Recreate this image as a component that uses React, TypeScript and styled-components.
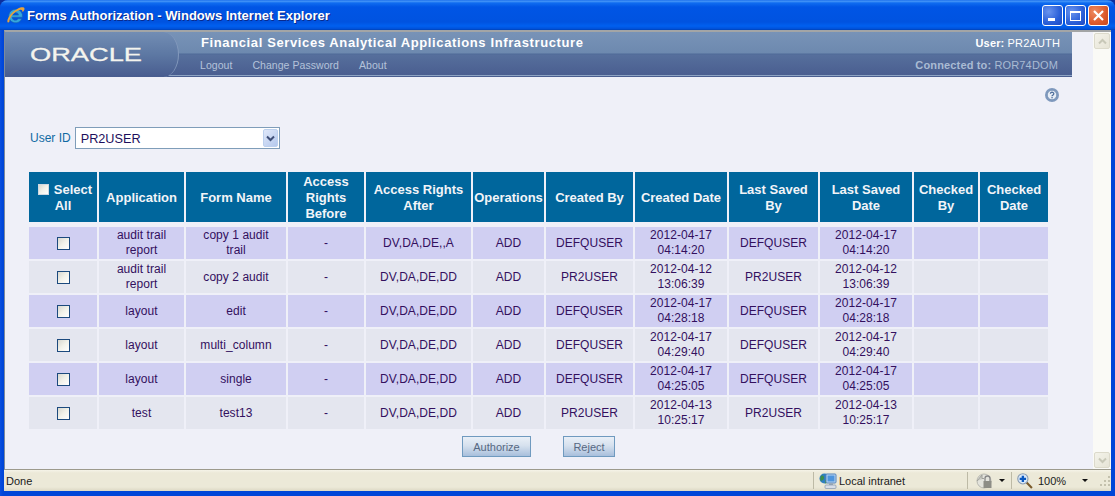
import React from "react";
import styled, { createGlobalStyle } from "styled-components";

const Global = createGlobalStyle`
  html, body { margin: 0; padding: 0; background: #0b2f9e; }
  * { box-sizing: border-box; }
`;

const Window = styled.div`
  width: 1115px;
  height: 496px;
  display: flex;
  flex-direction: column;
  overflow: hidden;
  background: linear-gradient(90deg, #0a4fe0 0, #0046d8 3px, #0046d8 100%);
  border-radius: 8px 8px 0 0;
  font-family: "Liberation Sans", Arial, sans-serif;
`;

const TitleBar = styled.div`
  height: 30px;
  flex: none;
  display: flex;
  align-items: center;
  padding: 1px 4px 0 5px;
  background: linear-gradient(180deg, #0a5fe8 0, #4b9bf8 1px, #0f6cf0 3px, #0055e5 7px, #0053e0 22px, #0060f0 26px, #0050d8 29px, #0040b0 100%);
`;

const TitleText = styled.span`
  margin-left: 1px;
  flex: 1;
  color: #fff;
  font-weight: 700;
  font-size: 13px;
  letter-spacing: 0;
  text-shadow: 1px 1px 0 #0a2a8c;
  white-space: nowrap;
`;

const WinButtons = styled.div`
  display: flex;
  gap: 2px;
  margin-right: 2px;
`;

const WinButton = styled.div<{ $close?: boolean }>`
  width: 21px;
  height: 21px;
  border: 1px solid #fff;
  border-radius: 3px;
  background: ${(p) =>
    p.$close
      ? "radial-gradient(circle at 30% 30%, #ee8a60, #dc5a2c 60%, #c8481c)"
      : "radial-gradient(circle at 30% 30%, #6a94ee, #2a5fd8 60%, #1c49c4)"};
  display: flex;
  align-items: center;
  justify-content: center;
`;

const Frame = styled.div`
  flex: 1;
  min-height: 0;
  display: flex;
  flex-direction: column;
  margin: 0 4px 5px 4px;
`;

const Viewport = styled.div`
  flex: 1;
  min-height: 0;
  display: flex;
  border-top: 2px solid #a3a5a6;
  border-left: 1px solid #7d8a9c;
  border-bottom: 1px solid #9c9a8c;
`;

const Page = styled.main`
  flex: 1;
  min-width: 0;
  background: #eff0f8;
  color: #33105e;
  display: flex;
  flex-direction: column;
`;

const Banner = styled.header`
  flex: none;
  height: 45px;
  margin-right: 21px;
  display: flex;
  background: linear-gradient(180deg, #7893b7 0, #6d89af 21px, #4f6a98 22px, #566f9c 23px, #4a5e90 43px, #8ea4c4 43px, #8ea4c4 44px, #4a5e90 44px);
  position: relative;
`;

const LogoPanel = styled.div`
  flex: none;
  width: 174px;
  border-right: 1px solid #8399bc;
  border-radius: 0 16px 16px 0 / 0 23px 23px 0;
  display: flex;
  align-items: center;
  padding-left: 24px;
  background: linear-gradient(180deg, #728db4 0, #5d78a3 50%, #485c8f 100%);
`;

const BannerMain = styled.div`
  flex: 1;
  min-width: 0;
  display: flex;
  flex-direction: column;
  padding-left: 21px;
  padding-right: 12px;
`;

const BannerRow = styled.div<{ $top?: boolean }>`
  height: ${(p) => (p.$top ? "21px" : "23px")};
  display: flex;
  align-items: center;
  justify-content: space-between;
  padding-top: ${(p) => (p.$top ? "0" : "1px")};
`;

const AppTitle = styled.span`
  margin-left: 1px;
  color: #fff;
  font-weight: 700;
  font-size: 13px;
  letter-spacing: 0.62px;
  white-space: nowrap;
`;

const Nav = styled.nav`
  display: flex;
  gap: 20px;
`;

const NavLink = styled.span`
  color: #b4c3da;
  font-size: 10.5px;
  letter-spacing: 0.05px;
`;

const Info = styled.span<{ $dim?: boolean }>`
  color: ${(p) => (p.$dim ? "#a9bbd3" : "#fff")};
  font-size: 11px;
  white-space: nowrap;
  letter-spacing: 0.15px;
  margin-right: ${(p) => (p.$dim ? "2px" : "0")};
  b { font-weight: 700; }
`;

const HelpRow = styled.div`
  display: flex;
  justify-content: flex-end;
  padding: 11px 34px 0 0;
  height: 25px;
`;

const UserRow = styled.div`
  display: flex;
  align-items: center;
  gap: 4px;
  margin: 25px 0 0 25px;
  height: 22px;
`;

const UserLabel = styled.label`
  color: #0f6aa3;
  font-size: 12px;
  font-weight: 400;
`;

const SelectBox = styled.div`
  width: 205px;
  height: 22px;
  background: #fff;
  border: 1px solid #7f9db9;
  display: flex;
  align-items: center;
  justify-content: space-between;
  padding: 1px 0 0 5px;
  color: #1d0f5c;
  font-size: 12.7px;
`;

const SelectArrow = styled.span`
  width: 15px;
  height: 18px;
  margin: -1px 1px 0 0;
  border-radius: 2px;
  background: linear-gradient(135deg, #e0e8fa, #b4c8ec);
  border: 1px solid #bcd0ee;
  display: flex;
  align-items: center;
  justify-content: center;
`;

const Grid = styled.div`
  margin: 23px 0 0 24px;
  width: 1019px;
  display: grid;
  grid-template-columns: 68px 85px 100px 76px 105px 71px 87px 92px 89px 92px 64px 68px;
  grid-template-rows: 53px repeat(6, 32px);
  column-gap: 2px;
  row-gap: 2px;
`;

const HeadCell = styled.div`
  background: #00669c;
  color: #f2f4f8;
  font-weight: 700;
  font-size: 13px;
  line-height: 16px;
  text-align: center;
  margin-bottom: 3px;
  display: flex;
  align-items: center;
  justify-content: center;
  padding: 1px 1px 0;
`;

const HeadInner = styled.span`
  display: block;
`;

const Row = styled.div`
  display: contents;
`;

const Cell = styled.div<{ $alt: boolean }>`
  background: ${(p) => (p.$alt ? "#e4e6ef" : "#d0cff2")};
  color: #33105e;
  font-size: 12px;
  line-height: 15px;
  letter-spacing: 0.05px;
  text-align: center;
  display: flex;
  align-items: center;
  justify-content: center;
  padding: 0 6px;
`;

const Check = styled.input.attrs({ type: "checkbox" })<{ $head?: boolean }>`
  appearance: none;
  margin: 0 ${(p) => (p.$head ? "5px" : "0")} 0 ${(p) => (p.$head ? "4px" : "0")};
  width: ${(p) => (p.$head ? "11px" : "13px")};
  height: ${(p) => (p.$head ? "11px" : "13px")};
  border: 1px solid ${(p) => (p.$head ? "#d0d8e0" : "#1c4a7e")};
  background: linear-gradient(135deg, #d8d8d0 0, #f2f2ea 50%, #ffffff 100%);
  vertical-align: -1px;
`;

const Actions = styled.div`
  display: flex;
  justify-content: center;
  gap: 32px;
  width: 1019px;
  margin: 7px 0 0 24px;
`;

const ActionButton = styled.button<{ $w: number }>`
  width: ${(p) => p.$w}px;
  height: 21px;
  border: 1px solid #6f9abf;
  background: linear-gradient(180deg, #e9eff7 0, #d6e1ee 45%, #a8bfdc 100%);
  color: #566882;
  font-family: "Liberation Sans", Arial, sans-serif;
  font-size: 11px;
  padding: 0;
`;

const ScrollBar = styled.aside`
  flex: none;
  width: 18px;
  background: #fafaf6;
  display: flex;
  flex-direction: column;
  justify-content: space-between;
  padding: 1px;
`;

const ScrollButton = styled.div`
  width: 16px;
  height: 16px;
  background: linear-gradient(135deg, #f4f3ea, #e6e4d6);
  border: 1px solid #dcdacb;
  border-radius: 2px;
  display: flex;
  align-items: center;
  justify-content: center;
`;

const StatusBar = styled.footer`
  flex: none;
  height: 21px;
  display: flex;
  align-items: center;
  background: linear-gradient(180deg, #f5f3e8 0, #ece9d8 3px, #ece9d8 17px, #dcd8c4 100%);
  color: #1a1a1a;
  font-family: "Liberation Sans", Tahoma, sans-serif;
  font-size: 11px;
`;

const StatusDone = styled.span`
  flex: 1;
  padding-left: 2px;
`;

const StatusCell = styled.div<{ $w: number; $pad: number; $gap: number }>`
  width: ${(p) => p.$w}px;
  height: 17px;
  border-left: 1px solid #bdbaa6;
  display: flex;
  align-items: center;
  gap: ${(p) => p.$gap}px;
  padding-left: ${(p) => p.$pad}px;
  flex: none;
`;

const Caret = styled.span<{ $ml: number }>`
  width: 0;
  height: 0;
  border-left: 3px solid transparent;
  border-right: 3px solid transparent;
  border-top: 3px solid #111;
  margin-left: ${(p) => p.$ml}px;
`;

const Grip = styled.svg`
  flex: none;
  margin-left: auto;
`;

const IEIcon = () => (
  <svg width="21" height="21" viewBox="0 0 20 20">
    <path d="M10 4a6.500 6.500 0 1 0 6 9h-3.600a3 3 0 0 1-5.600-1.300H16.600A6.500 6.500 0 0 0 10 4Zm-3 5.600a3 3 0 0 1 5.900 0Z" fill="#35a7dc" stroke="#1a62b4" strokeWidth=".6" />
    <path d="M2.500 16.500C1 14 6 6.500 12 3.500c3-1.500 6-1.800 6.500-.5.400 1-.5 2.500-1.800 4 .1-1.800-.6-2.800-2.700-2.300C9 6 4 12 4.200 16c-.7.900-1.300.9-1.700.5Z" fill="#e8a33a" />
  </svg>
);

const HelpIcon = () => (
  <svg width="14" height="14" viewBox="0 0 14 14">
    <circle cx="7" cy="7" r="7" fill="#7f99bd" />
    <circle cx="7" cy="7" r="4.700" fill="#e8eef6" stroke="#5f7fa8" strokeWidth=".6" />
    <path d="M5.400 5.700a1.700 1.500 0 1 1 2.500 1.400c-.6.300-.9.600-.9 1.200" fill="none" stroke="#4f6f9c" strokeWidth="1.300" />
    <rect x="6.400" y="9" width="1.300" height="1.300" fill="#4f6f9c" />
  </svg>
);

const ChevronDown = ({ c = "#3f4f78", w = 2 }: { c?: string; w?: number }) => (
  <svg width="9" height="7" viewBox="0 0 9 7">
    <path d="M1 1.500l3.500 3.500L8 1.500" fill="none" stroke={c} strokeWidth={w} />
  </svg>
);

const ChevronUp = ({ c, w }: { c: string; w: number }) => (
  <svg width="9" height="7" viewBox="0 0 9 7">
    <path d="M1 5.500L4.500 2 8 5.500" fill="none" stroke={c} strokeWidth={w} />
  </svg>
);

const NetIcon = () => (
  <svg width="18" height="18" viewBox="0 0 18 18">
    <circle cx="5.500" cy="6.500" r="5" fill="#2f7fbf" />
    <path d="M2 4c2-1 3 0 3 2s-2 2-3 3c-1-1-1-3 0-5Zm4 4c2 0 3 1 2 3l-2 .5Z" fill="#3d8f4a" />
    <rect x="7" y="2" width="10" height="9" rx="1" fill="#b9d4f0" stroke="#5584bc" />
    <rect x="8.500" y="3.500" width="7" height="6" fill="#4f95dd" />
    <rect x="10" y="11" width="4" height="2" fill="#9ab" />
    <rect x="6" y="13" width="11" height="3.500" rx="1" fill="#d8dee8" stroke="#8595ab" strokeWidth=".7" />
  </svg>
);

const LockIcon = () => (
  <svg width="18" height="18" viewBox="0 0 18 18">
    <circle cx="8" cy="9" r="7" fill="#e3e3dc" stroke="#b8b8b0" />
    <path d="M1 9l5-6v3.500h2" fill="#c9cac4" stroke="#9fa09a" />
    <path d="M9 9V6.500a2.500 2.500 0 0 1 5 0V9" fill="none" stroke="#888" strokeWidth="1.300" />
    <rect x="7.500" y="9" width="8" height="7" fill="#8d8d86" />
  </svg>
);

const ZoomIcon = () => (
  <svg width="16" height="16" viewBox="0 0 15 15">
    <path d="M9 9l5 5" stroke="#7a5a2a" strokeWidth="2" />
    <circle cx="5.500" cy="5.500" r="4.800" fill="#dbe9f8" stroke="#8a9cb2" />
    <path d="M5.500 2.500v6M2.500 5.500h6" stroke="#0a58c0" strokeWidth="2.200" />
  </svg>
);

const headers: React.ReactNode[] = [
  <HeadInner key="s"><Check $head readOnly />Select<br />All</HeadInner>,
  "Application",
  "Form Name",
  <HeadInner key="a">Access<br />Rights<br />Before</HeadInner>,
  <HeadInner key="b">Access Rights<br />After</HeadInner>,
  "Operations",
  "Created By",
  "Created Date",
  <HeadInner key="c">Last Saved<br />By</HeadInner>,
  <HeadInner key="d">Last Saved<br />Date</HeadInner>,
  <HeadInner key="e">Checked<br />By</HeadInner>,
  <HeadInner key="f">Checked<br />Date</HeadInner>,
];

const rows = [
  ["audit trail report", "copy 1 audit trail", "DV,DA,DE,,A", "DEFQUSER", "2012-04-17 04:14:20"],
  ["audit trail report", "copy 2 audit", "DV,DA,DE,DD", "PR2USER", "2012-04-12 13:06:39"],
  ["layout", "edit", "DV,DA,DE,DD", "DEFQUSER", "2012-04-17 04:28:18"],
  ["layout", "multi_column", "DV,DA,DE,DD", "DEFQUSER", "2012-04-17 04:29:40"],
  ["layout", "single", "DV,DA,DE,DD", "DEFQUSER", "2012-04-17 04:25:05"],
  ["test", "test13", "DV,DA,DE,DD", "PR2USER", "2012-04-13 10:25:17"],
];

export default function App() {
  return (
    <Window>
      <Global />
      <TitleBar>
        <IEIcon />
        <TitleText>Forms Authorization - Windows Internet Explorer</TitleText>
        <WinButtons>
          <WinButton>
            <svg width="13" height="13" viewBox="0 0 13 13"><rect x="2" y="9" width="7" height="3" fill="#fff" /></svg>
          </WinButton>
          <WinButton>
            <svg width="13" height="13" viewBox="0 0 13 13"><rect x="1.500" y="2.500" width="10" height="9" fill="none" stroke="#fff" /><rect x="1" y="2" width="11" height="2" fill="#fff" /></svg>
          </WinButton>
          <WinButton $close>
            <svg width="13" height="13" viewBox="0 0 13 13"><path d="M2 2l9 9M11 2l-9 9" stroke="#fff" strokeWidth="2.200" /></svg>
          </WinButton>
        </WinButtons>
      </TitleBar>
      <Frame>
        <Viewport>
          <Page>
            <Banner>
              <LogoPanel>
                <svg width="124" height="28" viewBox="0 0 124 28">
                  <text x="1" y="20" fontFamily="Liberation Sans" fontSize="19" fill="#f4f4ee" stroke="#f4f4ee" strokeWidth=".3" textLength="112" lengthAdjust="spacingAndGlyphs">ORACLE</text>
                </svg>
              </LogoPanel>
              <BannerMain>
                <BannerRow $top>
                  <AppTitle>Financial Services Analytical Applications Infrastructure</AppTitle>
                  <Info><b>User:</b> PR2AUTH</Info>
                </BannerRow>
                <BannerRow>
                  <Nav>
                    <NavLink>Logout</NavLink>
                    <NavLink>Change Password</NavLink>
                    <NavLink>About</NavLink>
                  </Nav>
                  <Info $dim><b>Connected to:</b> ROR74DOM</Info>
                </BannerRow>
              </BannerMain>
            </Banner>
            <HelpRow><HelpIcon /></HelpRow>
            <UserRow>
              <UserLabel>User ID</UserLabel>
              <SelectBox>
                PR2USER
                <SelectArrow><ChevronDown /></SelectArrow>
              </SelectBox>
            </UserRow>
            <Grid>
              <Row>
                {headers.map((h, i) => <HeadCell key={i}>{h}</HeadCell>)}
              </Row>
              {rows.map((r, i) => {
                const alt = i % 2 === 1;
                return (
                  <Row key={i}>
                    <Cell $alt={alt}><Check readOnly /></Cell>
                    <Cell $alt={alt}>{r[0]}</Cell>
                    <Cell $alt={alt}>{r[1]}</Cell>
                    <Cell $alt={alt}>-</Cell>
                    <Cell $alt={alt}>{r[2]}</Cell>
                    <Cell $alt={alt}>ADD</Cell>
                    <Cell $alt={alt}>{r[3]}</Cell>
                    <Cell $alt={alt}>{r[4]}</Cell>
                    <Cell $alt={alt}>{r[3]}</Cell>
                    <Cell $alt={alt}>{r[4]}</Cell>
                    <Cell $alt={alt} />
                    <Cell $alt={alt} />
                  </Row>
                );
              })}
            </Grid>
            <Actions>
              <ActionButton $w={69}>Authorize</ActionButton>
              <ActionButton $w={52}>Reject</ActionButton>
            </Actions>
          </Page>
          <ScrollBar>
            <ScrollButton><ChevronUp c="#c8c8b8" w={2} /></ScrollButton>
            <ScrollButton><ChevronDown c="#c8c8b8" w={2} /></ScrollButton>
          </ScrollBar>
        </Viewport>
        <StatusBar>
          <StatusDone>Done</StatusDone>
          <StatusCell $w={154} $pad={5} $gap={2}><NetIcon /><span>Local intranet</span></StatusCell>
          <StatusCell $w={44} $pad={8} $gap={5}><LockIcon /><Caret $ml={0} /></StatusCell>
          <StatusCell $w={100} $pad={5} $gap={5}>
            <ZoomIcon /><span>100%</span><Caret $ml={11} />
            <Grip width="12" height="12" viewBox="0 0 12 12">
              <path d="M9 1h2v2H9zM5 5h2v2H5zM9 5h2v2H9zM1 9h2v2H1zM5 9h2v2H5zM9 9h2v2H9z" fill="#c4c1ad" />
            </Grip>
          </StatusCell>
        </StatusBar>
      </Frame>
    </Window>
  );
}
